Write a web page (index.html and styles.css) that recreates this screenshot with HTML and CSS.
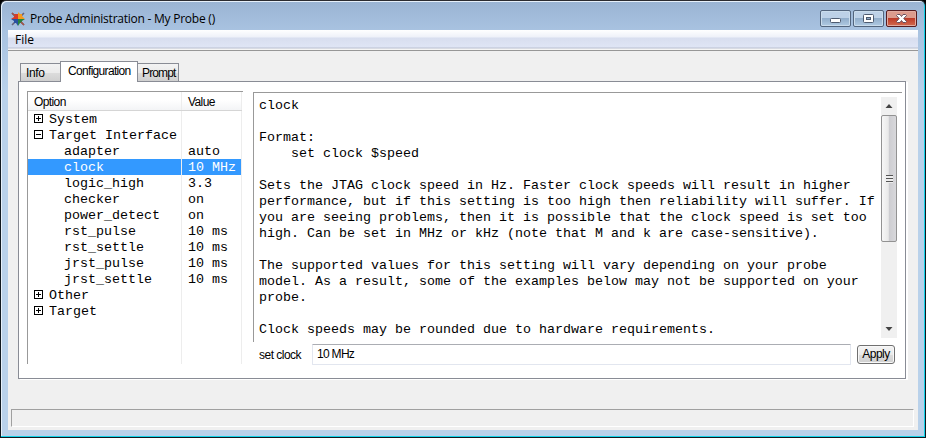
FILE: index.html
```
<!DOCTYPE html>
<html lang="en">
<head>
<meta charset="utf-8">
<title>Probe Administration</title>
<link rel="stylesheet" href="styles.css">
</head>
<body>
<div class="window">
  <header class="titlebar">
    <svg class="logo" width="14" height="14" viewBox="0 0 14 14">
      <path d="M1 1L13 13M13 1L1 13" stroke="#65627a" stroke-width="1.6"/>
      <path d="M3 2H7V7H0L3 5Z" fill="#d83a27"/><path d="M7 0L9 2H11V4L14 7H7Z" fill="#f49a20"/>
      <path d="M7 7H14L11 9V11H9L7 14Z" fill="#26833f"/><path d="M0 7H7V14L5 11H3V9Z" fill="#28509f"/>
      <path d="M1 1L4 4M10 10L13 13" stroke="#a65346" stroke-width="1.5"/>
    </svg>
    <h1 class="title">Probe Administration - My Probe ()</h1>
    <div class="controls">
      <button class="control" aria-label="Minimize"><svg width="29" height="15" viewBox="0 0 29 15"><rect x="9.5" y="7.5" width="10" height="4" rx="1" fill="#fff" stroke="#4e5b70"/></svg></button>
      <button class="control" aria-label="Maximize"><svg width="29" height="15" viewBox="0 0 29 15"><rect x="9.5" y="3.5" width="10" height="8" rx="1" fill="#fff" stroke="#4e5b70"/><rect x="12.5" y="6.5" width="4" height="2" fill="#8fabc9" stroke="#4e5b70"/></svg></button>
      <button class="control close" aria-label="Close"><svg width="29" height="15" viewBox="0 0 29 15"><path d="M10.5 3.5H13L14.5 5.5L16 3.5H18.5L19.5 4.5L16.8 7.5L19.5 10.5L18.5 11.5H16L14.5 9.5L13 11.5H10.5L9.5 10.5L12.2 7.5L9.5 4.5Z" fill="#fff" stroke="#65505f"/></svg></button>
    </div>
  </header>
  <main class="client">
    <nav class="menubar"><span>File</span></nav>
    <div class="tabs">
      <div class="tab info">Info</div><div class="tab active">Configuration</div><div class="tab prompt">Prompt</div>
    </div>
    <section class="panel">
      <div class="tree">
        <div class="row head"><span class="name">Option</span><span class="value">Value</span></div>
        <div class="row"><span class="name"><i class="toggle plus"></i>System</span><span class="value"></span></div>
        <div class="row"><span class="name"><i class="toggle"></i>Target Interface</span><span class="value"></span></div>
        <div class="row child"><span class="name">adapter</span><span class="value">auto</span></div>
        <div class="row child selected"><span class="name">clock</span><span class="value">10 MHz</span></div>
        <div class="row child"><span class="name">logic_high</span><span class="value">3.3</span></div>
        <div class="row child"><span class="name">checker</span><span class="value">on</span></div>
        <div class="row child"><span class="name">power_detect</span><span class="value">on</span></div>
        <div class="row child"><span class="name">rst_pulse</span><span class="value">10 ms</span></div>
        <div class="row child"><span class="name">rst_settle</span><span class="value">10 ms</span></div>
        <div class="row child"><span class="name">jrst_pulse</span><span class="value">10 ms</span></div>
        <div class="row child"><span class="name">jrst_settle</span><span class="value">10 ms</span></div>
        <div class="row"><span class="name"><i class="toggle plus"></i>Other</span><span class="value"></span></div>
        <div class="row"><span class="name"><i class="toggle plus"></i>Target</span><span class="value"></span></div>
        <div class="row rest"><span class="name"></span><span class="value"></span></div>
      </div>
      <div class="detail">
        <div class="help">
<pre class="text">clock

Format:
    set clock $speed

Sets the JTAG clock speed in Hz. Faster clock speeds will result in higher
performance, but if this setting is too high then reliability will suffer. If
you are seeing problems, then it is possible that the clock speed is set too
high. Can be set in MHz or kHz (note that M and k are case-sensitive).

The supported values for this setting will vary depending on your probe
model. As a result, some of the examples below may not be supported on your
probe.

Clock speeds may be rounded due to hardware requirements.</pre>
          <div class="scrollbar">
            <svg class="arrow" width="16" height="18" viewBox="0 0 16 18"><path d="M4.5 11L8 7L11.5 11Z" fill="#444"/></svg>
            <div class="thumb"><i class="grip"></i></div>
            <svg class="arrow" width="16" height="18" viewBox="0 0 16 18"><path d="M4.5 7L8 11L11.5 7Z" fill="#444"/></svg>
          </div>
        </div>
        <div class="form"><label class="label" for="speed">set clock</label><input class="input" id="speed" value="10 MHz"><button class="apply">Apply</button></div>
      </div>
    </section>
    <footer class="status"></footer>
  </main>
</div>
</body>
</html>
```
FILE: styles.css
```
* { box-sizing: border-box; }
body { margin: 0; background: #000; overflow: hidden; }
.window {
  width: 926px; height: 438px; padding: 0 6px 6px 7px;
  display: flex; flex-direction: column;
  border: 1px solid #101820; border-top-color: #2b2b30; border-radius: 6px 6px 0 0;
  box-shadow: inset -1px -1px #12d2e8, inset 1px 1px #e6f0fa;
  background: linear-gradient(#9ab4d3 0, #a9c3e1 30px, #b9d1ea 90px);
  font-family: "Liberation Sans", Arial, sans-serif; font-size: 12px; color: #000;
}
.titlebar { height: 29px; flex: none; display: flex; align-items: flex-start; padding: 0 2px 0 3px; }
.logo { margin-top: 11px; flex: none; }
.title { margin: 9px 0 0 5px; font: 12px/17px "Open Sans", sans-serif; letter-spacing: -.24px; white-space: nowrap; }
.controls { margin: 9px 0 0 auto; display: flex; gap: 2px; }
.control {
  width: 31px; height: 17px; padding: 0; display: flex; border: 1px solid #53657d; border-radius: 2px;
  background: linear-gradient(#bdd1e7 0 45%, #92aecb 50%, #b0cae3);
  box-shadow: inset 0 0 0 1px #cadcec;
}
.close { border-color: #571c20; background: linear-gradient(#dc9b8d 0 45%, #bd3b28 50%, #d26b50); box-shadow: inset 0 0 0 1px #e1aba0; }
.client { width: 910px; height: 400px; background: #f0f0f0; display: flex; flex-direction: column; }
.menubar { height: 21px; flex: none; padding: 0 7px; border-bottom: 1px solid #979797;
  background: linear-gradient(#fff 0, #eef1f9 7px, #d8deef 8px, #dfe5f5 17px, #b9bfd0 18px, #f5f5f5 19px); font: 12px/20px "Open Sans", sans-serif; }
.tabs { height: 30px; flex: none; display: flex; align-items: flex-end; padding-left: 12px; }
.tab { height: 18px; line-height: 19px; border: 1px solid #898c95; border-bottom: 0; background: linear-gradient(#f3f3f3, #ebebeb 50%, #dcdcdc 51%, #d0d0d0); }
.info { width: 40px; padding-left: 5px; border-right: 0; letter-spacing: -.4px; }
.active { width: 78px; height: 21px; line-height: 19px; padding-left: 7px; background: #fff; margin-bottom: -1px; z-index: 1; letter-spacing: -.68px; }
.prompt { width: 41px; padding-left: 4px; border-left: 0; letter-spacing: -.85px; }
.panel { width: 888px; height: 298px; margin-left: 10px; flex: none; display: flex; gap: 10px; padding: 9px 0 0 8px; border: 1px solid #898c95; background: #fff; box-shadow: 2px 1px #fff; }
.tree { width: 216px; height: 273px; display: flex; flex-direction: column; border-top: 1px solid #999; border-left: 1px solid #999; }
.row { height: 16px; flex: none; display: flex; font: 13.333px/18px "Liberation Mono", monospace; white-space: pre; }
.name { width: 154px; border-right: 1px solid #ededed; padding-left: 6px; display: flex; align-items: flex-start; }
.value { width: 60px; border-right: 1px solid #ededed; padding-left: 6px; }
.child .name { padding-left: 36px; }
.head { height: 19px; font: 12px/20px "Liberation Sans", Arial, sans-serif; letter-spacing: -.6px; border-bottom: 1px solid #d5d5d5; background: linear-gradient(#fff 45%, #f3f4f6); margin-right: 1px; }
.selected { background: #39f; color: #fff; margin-right: 1px; }
.rest { height: auto; flex: 1; }
.toggle { width: 9px; height: 9px; margin: 3px 6px 0 0; border: 1px solid #000; background: linear-gradient(#000, #000) center / 5px 1px no-repeat; }
.plus { background: linear-gradient(#000, #000) center / 5px 1px no-repeat, linear-gradient(#000, #000) center / 1px 5px no-repeat; }
.detail { width: 650px; padding-top: 1px; }
.help { width: 649px; height: 250px; display: flex; justify-content: space-between; border-top: 1px solid #999; border-left: 1px solid #999; padding: 4px 5px 4px; }
.text { margin: 0; padding-top: 1px; font: 13.333px/16px "Liberation Mono", monospace; }
.scrollbar { width: 16px; height: 241px; display: flex; flex-direction: column; background: #f0f0f0; }
.arrow { flex: none; }
.arrow:last-child { margin-top: auto; }
.thumb { height: 127px; border: 1px solid #929292; border-radius: 2px; background: linear-gradient(90deg, #f7f7f7 0, #e9e9e9 45%, #cdcdd1 52%, #d8d8db); display: flex; align-items: center; justify-content: center; }
.grip { width: 7px; height: 8px; background: repeating-linear-gradient(#555 0 1px, #eee 1px 3px); }
.form { height: 21px; margin-top: 2px; display: flex; align-items: flex-start; }
.label { width: 59px; padding-left: 6px; line-height: 22px; letter-spacing: -.52px; }
.input { width: 539px; height: 21px; padding: 0 4px 2px; border: 1px solid #e2e6ef; border-top-color: #abadb3; border-radius: 1px; font: 12px "Liberation Sans", Arial, sans-serif; letter-spacing: -.7px; outline: 0; }
.apply { width: 38px; height: 19px; margin: 1px 0 0 6px; padding: 0; border: 1px solid #707070; border-radius: 3px; background: linear-gradient(#f3f3f3, #ebebeb 50%, #dcdcdc 51%, #d0d0d0); box-shadow: inset 0 0 0 1px #f8f8f8; font: 12px/17px "Liberation Sans", Arial, sans-serif; letter-spacing: -.55px; color: #000; }
.status { height: 18px; margin: 30px 4px 0 3px; border: 1px solid #a0a0a0; border-right-color: #fff; border-bottom-color: #fff; }
```
